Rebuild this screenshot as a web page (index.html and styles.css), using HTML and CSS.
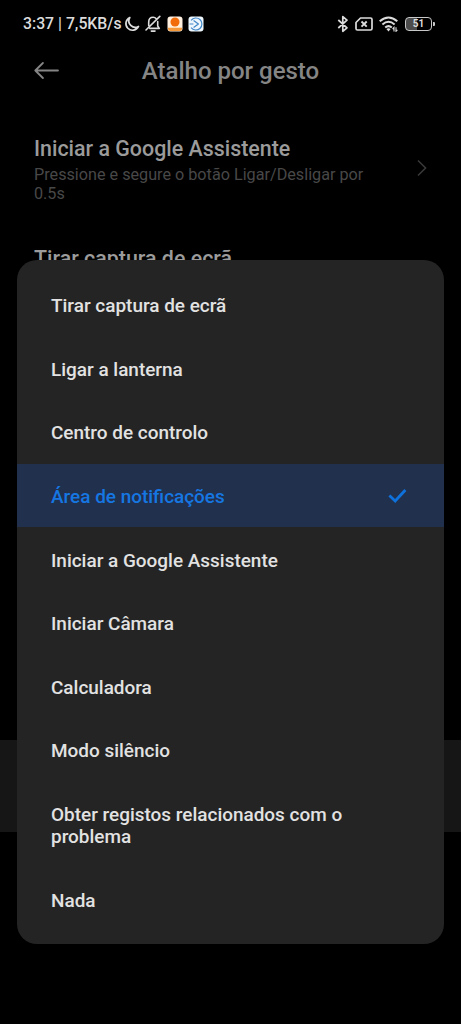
FILE: index.html
```html
<!DOCTYPE html>
<html lang="pt">
<head>
<meta charset="utf-8">
<meta name="viewport" content="width=device-width, initial-scale=1">
<title>Atalho por gesto</title>
<link rel="stylesheet" href="styles.css">
</head>
<body>
<div class="screen">
  <header class="status">
    <span class="status-text">3:37 | 7,5KB/s</span>
    <div class="status-left">
      <svg width="16" height="16" viewBox="0 0 16 16" fill="none" stroke="#dcdcdc" stroke-width="1.7" stroke-linejoin="round"><path d="M5.8 1.6A6.6 6.6 0 1 0 14.5 10.4A6.4 6.4 0 0 1 5.8 1.6Z"/></svg>
      <svg width="16" height="18" viewBox="0 0 16 18" fill="none" stroke="#dcdcdc" stroke-width="1.6" stroke-linecap="round" stroke-linejoin="round"><path d="M11.2 3.7C10.3 2.6 9.3 2.2 8.2 2.2C5.3 2.2 3.7 4.4 3.7 7.2V10.5M12.7 6.5V11L14.3 13.4H4.8M1 15L14.8 1.4"/><path d="M6.3 16.1H10"/></svg>
      <svg width="16" height="16" viewBox="0 0 16 16"><rect x=".5" y=".5" width="15" height="15" rx="3" fill="#fff0df"/><circle cx="8" cy="6" r="4.5" fill="#f36c0b"/><path d="M1 11.8H15V12.5Q15 15 12.5 15H3.5Q1 15 1 12.5Z" fill="#f59a3c"/></svg>
      <svg width="16" height="16" viewBox="0 0 16 16"><rect x=".5" y=".5" width="15" height="15" rx="3" fill="#eef7fd"/><g fill="none" stroke="#3f86c8" stroke-width="1.2" stroke-linejoin="round"><path d="M3.1 4.4A6 6 0 1 1 3.1 11.6"/><path d="M5.6 4.6L10.4 8L5.6 11.4M1.6 8H5.4"/></g></svg>
    </div>
    <div class="status-right">
      <svg width="12" height="18" viewBox="0 0 12 18" fill="none" stroke="#dcdcdc" stroke-width="1.7" stroke-linejoin="round"><path d="M1.3 5L10 12.8L5.8 16.3V1.7L10 5.2L1.3 13"/></svg>
      <svg width="18" height="14" viewBox="0 0 18 14" fill="none" stroke="#dcdcdc" stroke-width="1.7" stroke-linejoin="round"><path d="M5.5 1H15.5Q17 1 17 2.5V11.5Q17 13 15.5 13H2.5Q1 13 1 11.5V5.5Z"/><path d="M6.5 4.5L11.7 9.7M11.7 4.5L6.5 9.7" stroke-width="1.9"/></svg>
      <svg width="20" height="16" viewBox="0 0 20 16" fill="none" stroke="#dcdcdc" stroke-width="2"><path d="M.7 5.3Q9.5-2.4 18.3 5.3M3.4 8.4Q9.5 3.2 15.6 8.4M6.2 11.5Q9.5 8.7 12.8 11.5"/><path d="M7.4 13.1Q9.5 11.6 11.6 13.1L9.5 15.5Z" fill="#dcdcdc" stroke="none"/><path d="M15 15.5V11.5L13.6 13M17 11.3V15.3L18.4 13.8" stroke-width="1.1"/></svg>
      <div class="battery"><span>51</span></div>
    </div>
  </header>

  <div class="titlebar">
    <svg class="back" width="26" height="18" viewBox="0 0 26 18" fill="none" stroke="#858585" stroke-width="1.8" stroke-linecap="round" stroke-linejoin="round"><path d="M24 8.5H1.3M8.9 1L1.3 8.5L8.9 16"/></svg>
    <h1>Atalho por gesto</h1>
  </div>

  <main class="settings">
    <section class="setting">
      <div>
        <h2>Iniciar a Google Assistente</h2>
        <p>Pressione e segure o botão Ligar/Desligar por 0.5s</p>
      </div>
      <svg width="10" height="18" viewBox="0 0 10 18" fill="none" stroke="#3a3a3a" stroke-width="1.5"><path d="M1 1.5L8.6 9L1 16.5"/></svg>
    </section>
    <section class="setting"><h2>Tirar captura de ecrã</h2></section>
    <div class="pressed-row"></div>
  </main>

  <div class="dialog" role="listbox">
    <div class="option">Tirar captura de ecrã</div>
    <div class="option">Ligar a lanterna</div>
    <div class="option">Centro de controlo</div>
    <div class="option selected">Área de notificações
      <svg width="19" height="16" viewBox="0 0 19 16" fill="none" stroke="#0f72dc" stroke-width="2.8"><path d="M1.4 7.4L7.2 12.9L17.4 2"/></svg>
    </div>
    <div class="option">Iniciar a Google Assistente</div>
    <div class="option">Iniciar Câmara</div>
    <div class="option">Calculadora</div>
    <div class="option">Modo silêncio</div>
    <div class="option">Obter registos relacionados com o<br>problema</div>
    <div class="option">Nada</div>
  </div>
</div>
</body>
</html>
```
FILE: styles.css
```css
* { box-sizing: border-box; }
body {
  margin: 0;
  background: #000;
  font-family: Roboto, sans-serif;
}
svg { display: block; flex: none; }
h1, h2, p { margin: 0; }
.screen {
  position: relative;
  height: 1024px;
  overflow: hidden;
  display: flex;
  flex-direction: column;
}
.status {
  height: 47px;
  padding: 0 29px 0 23px;
  display: flex;
  align-items: center;
  color: #dcdcdc;
}
.status-text {
  width: 101px;
  font-size: 15.8px;
  font-weight: 500;
  white-space: nowrap;
}
.status-left {
  display: flex;
  align-items: center;
  gap: 5.3px;
}
.status-right {
  margin-left: auto;
  display: flex;
  align-items: center;
  gap: 6px;
}
.battery {
  position: relative;
  width: 27px;
  height: 14px;
  border: 1.5px solid #c8c8c8;
  border-radius: 4px;
  background: linear-gradient(90deg, #4c4c4c 45%, #000 45%);
  font-size: 10px;
  font-weight: 700;
  line-height: 12px;
  text-align: center;
}
.battery::after {
  content: "";
  position: absolute;
  right: -4px;
  top: 4px;
  width: 2px;
  height: 4px;
  background: #c8c8c8;
  border-radius: 0 1px 1px 0;
}
.titlebar {
  height: 48px;
  display: grid;
  grid-template-columns: 34px 1fr 34px;
  align-items: center;
}
.back { margin-left: 34px; }
h1 {
  text-align: center;
  font-size: 24px;
  font-weight: 500;
  line-height: 28px;
  color: #858585;
}
.settings {
  flex: 1;
  padding-top: 41px;
}
.setting {
  height: 110px;
  padding: 0 34px;
  display: flex;
  align-items: flex-start;
  justify-content: space-between;
}
.setting svg { margin-top: 23px; }
h2 {
  font-size: 21.4px;
  font-weight: 500;
  line-height: 26px;
  color: #9b9b9b;
}
.setting p {
  width: 345px;
  margin-top: 3px;
  font-size: 16.2px;
  line-height: 19px;
  color: #484848;
}
.pressed-row {
  margin-top: 384px;
  height: 92px;
  background: #161616;
}
.dialog {
  position: absolute;
  left: 17px;
  right: 17px;
  top: 260px;
  padding: 12.9px 0;
  border-radius: 20px;
  background: #242424;
}
.option {
  padding: 22.3px 37px 19.3px 34px;
  display: flex;
  align-items: center;
  justify-content: space-between;
  font-size: 18.95px;
  font-weight: 500;
  line-height: 22px;
  color: #e2e2e2;
}
.option svg { margin-top: -2px; }
.selected {
  background: #20304d;
  color: #1677e3;
}
```
